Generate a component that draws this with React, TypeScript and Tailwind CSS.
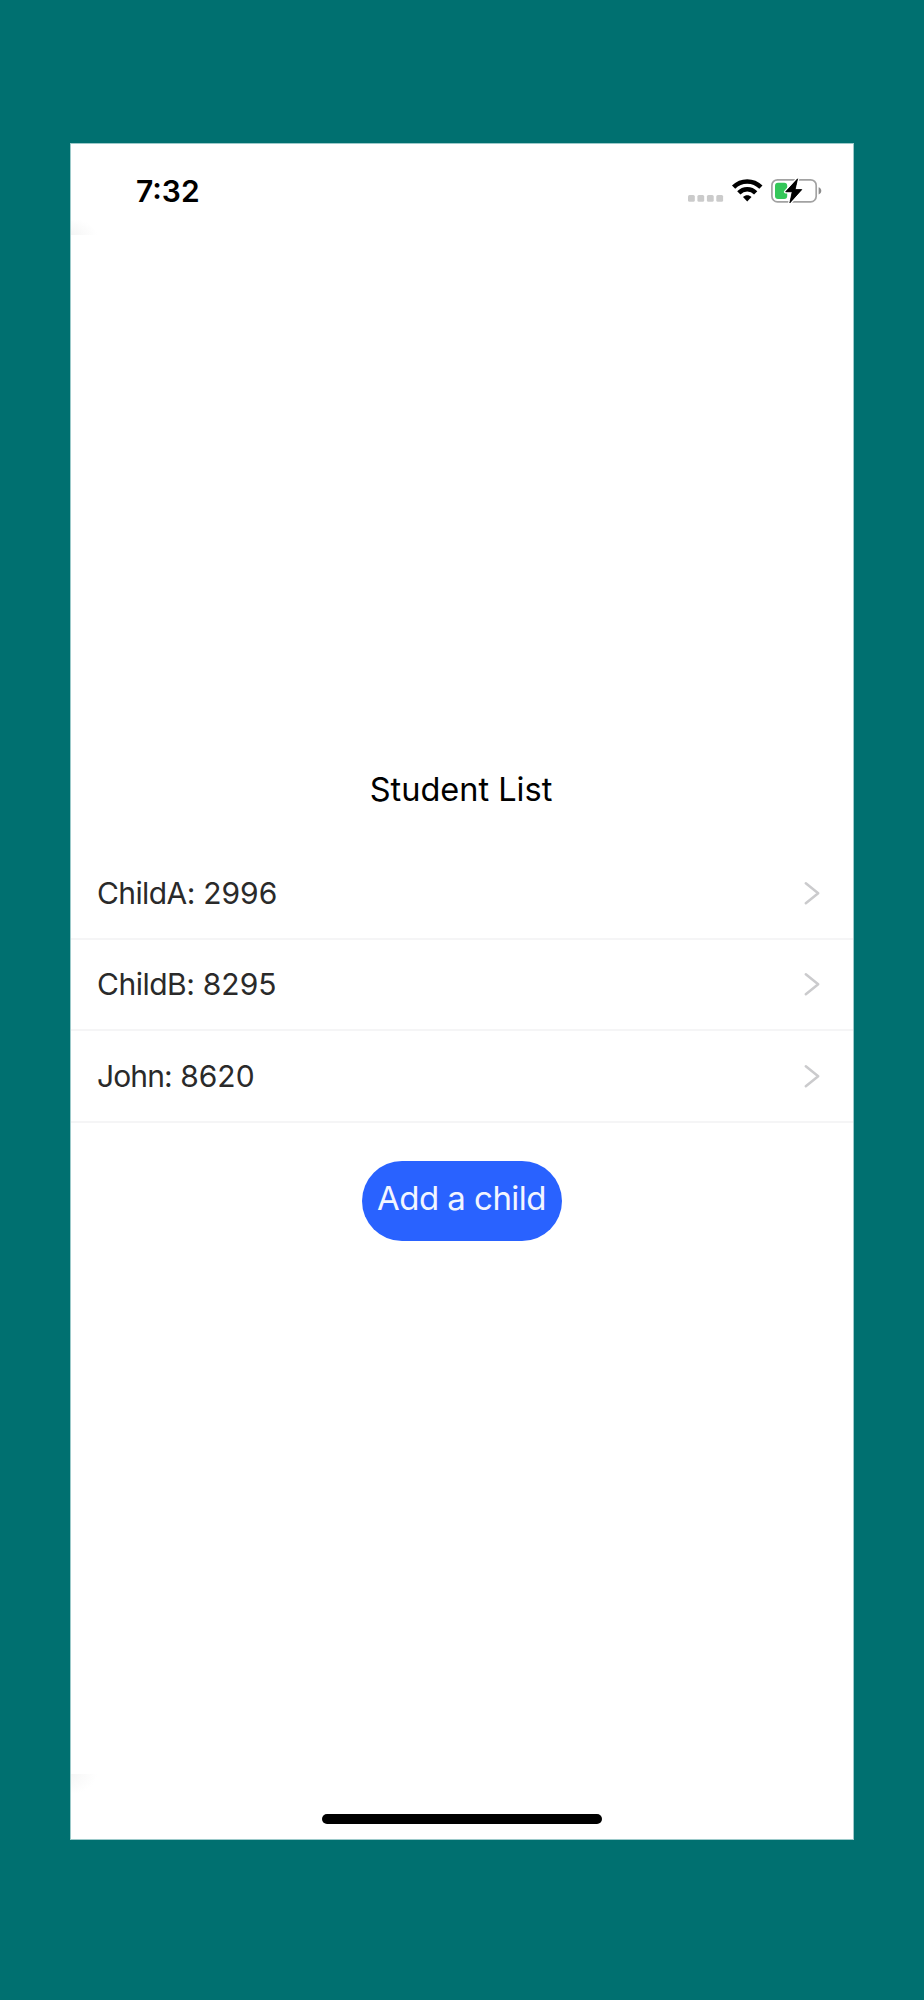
const students = [
  { name: 'ChildA', code: '2996', tracking: 'tracking-[-0.6px]' },
  { name: 'ChildB', code: '8295', tracking: 'tracking-[-0.5px]' },
  { name: 'John', code: '8620', tracking: 'tracking-[-0.9px]' },
];

function StatusIcons() {
  return (
    <svg className="mt-8 h-[30px] w-[136px]" viewBox="687 176 136 30" fill="none">
      <g fill="#cbcbcb">
        <rect x="688" y="195" width="6.8" height="6.8" rx="1.5" />
        <rect x="697.4" y="195" width="6.8" height="6.8" rx="1.5" />
        <rect x="706.9" y="195" width="6.8" height="6.8" rx="1.5" />
        <rect x="716.3" y="195" width="6.8" height="6.8" rx="1.5" />
      </g>
      <g stroke="#000" strokeWidth="4.5">
        <path d="M733.6 187.2C741.2 179.5 753.2 179.5 760.9 187.2" />
        <path d="M738.8 192.9C743.5 188 751 188 755.7 192.9" />
      </g>
      <path d="M743 196.9C745.5 194.7 749 194.7 751.5 196.9L747.2 201.5Z" fill="#000" />
      <rect x="771.9" y="179.8" width="44.3" height="22.1" rx="5.6" stroke="#a2a2a2" strokeWidth="1.7" />
      <path d="M818.6 187.2C822.2 188.4 822.2 193.2 818.6 194.4Z" fill="#8c8c8c" />
      <rect x="775" y="182.7" width="12.2" height="16.2" rx="3" fill="#34c759" />
      <path
        d="M797.6 178.8L785.6 191.8H792.2L789.8 202.9L801.8 189.6H795.1Z"
        fill="#000"
        stroke="#fff"
        strokeWidth="3.4"
        strokeLinejoin="round"
        paintOrder="stroke"
      />
      <path d="M797.6 178.8L785.6 191.8H792.2L789.8 202.9L801.8 189.6H795.1Z" fill="#000" stroke="#000" strokeWidth="0.7" strokeLinejoin="round" />
    </svg>
  );
}

function Chevron() {
  return (
    <svg className="h-6 w-4" viewBox="0 0 16 24" fill="none" stroke="#cbcbcd" strokeWidth="2.5" strokeLinecap="round" strokeLinejoin="round">
      <path d="M1.8 2.2L14.2 12.2L1.8 22.2" />
    </svg>
  );
}

export default function App() {
  return (
    <div className="flex h-[2000px] w-[924px] flex-col bg-[#007070] px-[70px] pt-[143px] font-['Inter',sans-serif]">
      <main className="flex h-[1697px] flex-col border border-[#9ccaca] bg-white">
        <header className="flex h-[91px] shrink-0 items-start justify-between bg-[radial-gradient(ellipse_26px_16px_at_0_100%,#f5f5f5,#fff)] pr-[30px] pl-[65px]">
          <time className="mt-[29px] text-[30px] leading-9 font-semibold text-black">7:32</time>
          <StatusIcons />
        </header>

        <h1 className="mt-[535px] pr-[2px] text-center text-[32.5px] leading-10 font-normal text-black">Student List</h1>

        <ul className="mt-[38px] flex flex-col">
          {students.map((student) => (
            <li key={student.name} className="flex h-[91.6px] items-center justify-between border-b-2 border-[#f5f5f6] pr-[33px] pl-[26px]">
              <span className="text-[30px] leading-9 text-[#2a2a2a]">
                <span className={student.tracking}>{student.name}:</span> {student.code}
              </span>
              <Chevron />
            </li>
          ))}
        </ul>

        <button className="mt-[38px] flex h-20 w-[200px] shrink-0 items-start justify-center self-center rounded-full bg-[#2962ff] pt-[17px] pr-px text-[33px] leading-10 font-normal tracking-[-0.55px] whitespace-nowrap text-[#f2f5ff]">
          Add a child
        </button>

        <div className="mt-auto h-[65px] shrink-0 bg-[radial-gradient(ellipse_26px_20px_at_0_0,#f6f6f6,#fff)] pt-10">
          <div className="mx-auto h-[10px] w-[280px] rounded-full bg-black" />
        </div>
      </main>
    </div>
  );
}
